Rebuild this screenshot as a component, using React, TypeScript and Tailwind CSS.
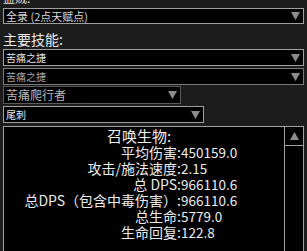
import { ReactNode } from 'react';

type BoxProps = {
  text: string;
  width?: string;
  className?: string;
  textClass?: string;
  borderClass?: string;
};

function Arrow() {
  return (
    <svg width="9" height="8" viewBox="0 0 9 8" className="shrink-0">
      <path d="M0 0 L9 0 L4.5 8 Z" fill="#8c8c8c" />
    </svg>
  );
}

function DropBox({ text, width = 'w-[301px]', className = '', textClass = 'text-[10px] text-[#e6e6e6]', borderClass = 'border-[#a0a0a0]' }: BoxProps) {
  return (
    <div className={`flex items-center justify-between bg-black border ${borderClass} ${width} ${className}`}>
      <span className={`pl-[2px] leading-none whitespace-nowrap ${textClass}`}>{text}</span>
      <div className="flex items-center justify-center w-[14px] h-full pr-[2px]">
        <Arrow />
      </div>
    </div>
  );
}

function Row({ label, value }: { label: ReactNode; value: string }) {
  return (
    <>
      <div className="text-right whitespace-nowrap">{label}</div>
      <div className="whitespace-nowrap text-[13.5px]">{value}</div>
    </>
  );
}

const stats = [
  { label: '平均伤害:', value: '450159.0' },
  { label: '攻击/施法速度:', value: '2.15' },
  { label: '总 DPS:', value: '966110.6' },
  { label: '总DPS（包含中毒伤害）:', value: '966110.6' },
  { label: '总生命:', value: '5779.0' },
  { label: '生命回复:', value: '122.8' },
];

export default function App() {
  return (
    <div
      className="w-[307px] h-[251px] overflow-hidden bg-[#1c1c1c] pl-[3px] text-[#e8e8e8]"
      style={{ fontFamily: '"Noto Sans CJK SC", "Noto Sans", sans-serif' }}
    >
      <div className="text-[12px] leading-[14px] -mt-[9px] text-[#e0e0e0]">盗贼:</div>
      <DropBox text="全录 (2点天赋点)" className="mt-[3px] h-[16px]" textClass="text-[11px] text-[#d8d8d8]" />
      <div className="mt-[7px] text-[14px] leading-[16px] text-[#e8e8e8]">主要技能:</div>
      <DropBox text="苦痛之捷" className="mt-[2px] h-[17px]" />
      <DropBox text="苦痛之捷" className="mt-[2px] h-[17px]" textClass="text-[10px] text-[#a8a8a8]" borderClass="border-[#7a7a7a]" />
      <DropBox
        text="苦痛爬行者"
        width="w-[178px]"
        className="mt-[1px] h-[18px]"
        textClass="text-[12px] text-[#b8b8b8]"
        borderClass="border-[#5a5a5a]"
      />
      <DropBox text="尾刺" width="w-[201px]" className="mt-[2px] h-[17px]" />

      <div className="mt-[3px] flex w-[301px] h-[140px] bg-black border border-[#a0a0a0]">
        <div className="flex-1">
          <div className="pl-[103px] text-[15px] leading-[18px] text-[#f0f0f0]">召唤生物:</div>
          <div className="grid grid-cols-[177px_1fr] text-[14px] leading-[15.9px] text-[#ececec]">
            {stats.map((s) => (
              <Row key={s.label} label={s.label} value={s.value} />
            ))}
          </div>
        </div>
        <div className="w-[19px] border-l border-[#a0a0a0] flex flex-col">
          <div className="h-[19px] border-b border-[#a0a0a0] flex items-center justify-center">
            <svg width="9" height="8" viewBox="0 0 9 8">
              <path d="M0 8 L9 8 L4.5 0 Z" fill="#8c8c8c" />
            </svg>
          </div>
        </div>
      </div>
    </div>
  );
}
